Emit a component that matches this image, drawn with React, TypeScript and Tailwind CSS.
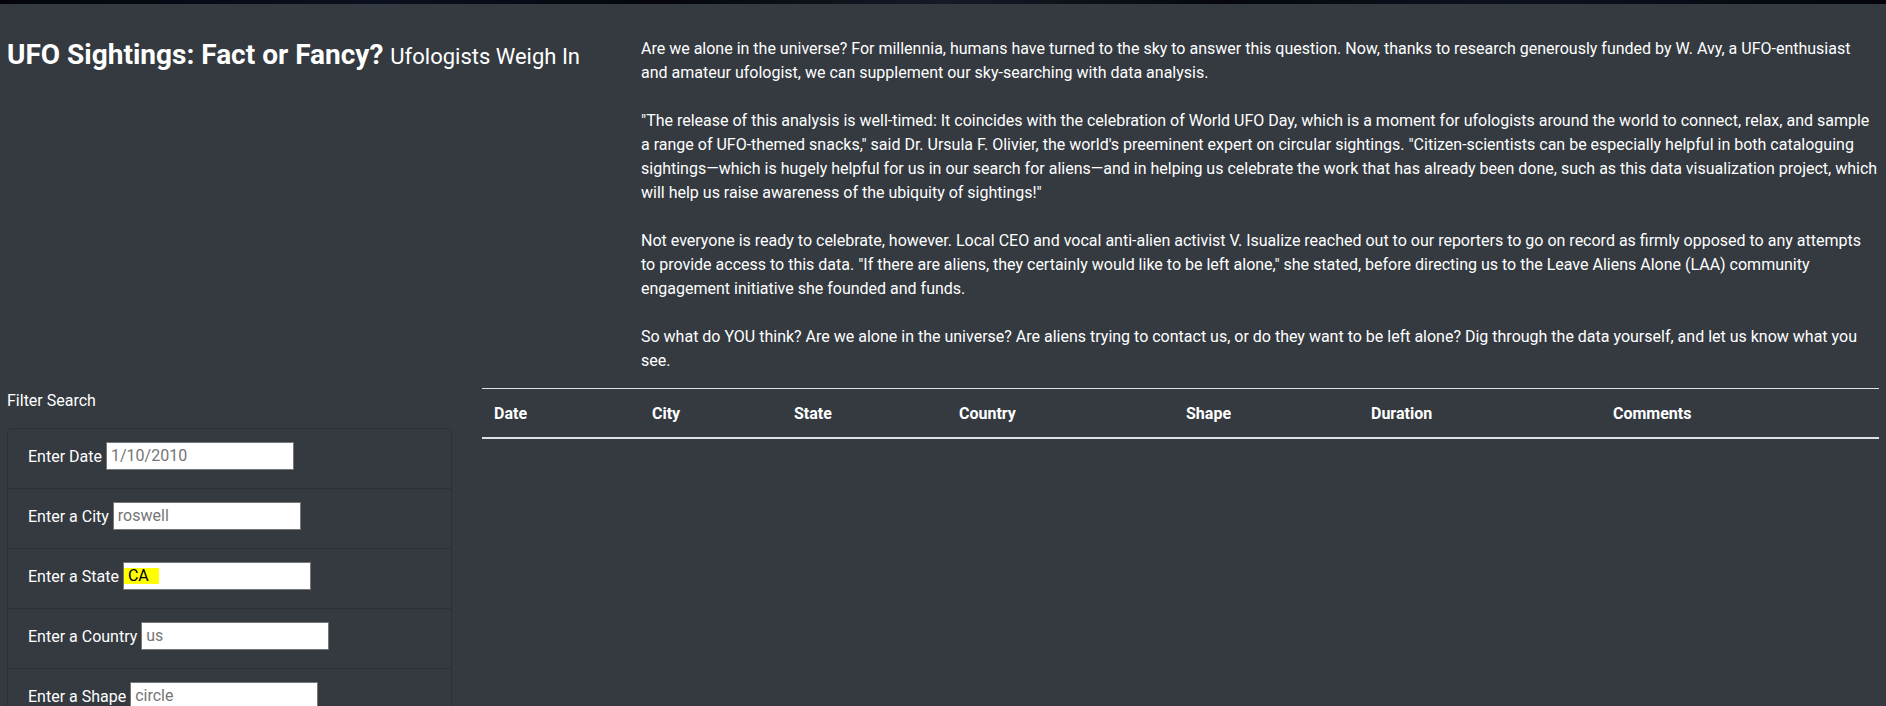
import React from "react";

const font = { fontFamily: "Roboto, 'Liberation Sans', sans-serif" };

const filters: { label: string; value: string; highlight?: boolean }[] = [
  { label: "Enter Date", value: "1/10/2010" },
  { label: "Enter a City", value: "roswell" },
  { label: "Enter a State", value: "CA", highlight: true },
  { label: "Enter a Country", value: "us" },
  { label: "Enter a Shape", value: "circle" },
];

const columns: { name: string; w: string }[] = [
  { name: "Date", w: "w-[158px]" },
  { name: "City", w: "w-[142px]" },
  { name: "State", w: "w-[165px]" },
  { name: "Country", w: "w-[227px]" },
  { name: "Shape", w: "w-[185px]" },
  { name: "Duration", w: "w-[242px]" },
  { name: "Comments", w: "w-[278px]" },
];

export default function App() {
  return (
    <div className="min-h-screen bg-[#343a40] text-white" style={font}>
      <div className="h-[4px] bg-[linear-gradient(90deg,#03050a_0%,#0b1020_20%,#04060b_35%,#151a26_50%,#05070c_65%,#0d1220_80%,#03050a_100%)]" />

      <div className="flex px-[7px] pt-[33px]">
        <div className="w-[634px] shrink-0">
          <h1 className="mt-[1px] text-[28px] leading-[34px] font-bold">
            UFO Sightings: Fact or Fancy?{" "}
            <small className="text-[22px] font-normal">Ufologists Weigh In</small>
          </h1>
        </div>
        <div className="flex-1 text-[16px] leading-[24px]">
          <p className="mb-[24px]">
            Are we alone in the universe? For millennia, humans have turned to the sky to answer this question. Now, thanks to
            research generously funded by W. Avy, a UFO-enthusiast and amateur ufologist, we can supplement our sky-searching
            with data analysis.
          </p>
          <p className="mb-[24px]">
            "The release of this analysis is well-timed: It coincides with the celebration of World UFO Day, which is a moment
            for ufologists around the world to connect, relax, and sample a range of UFO-themed snacks," said Dr. Ursula F.
            Olivier, the world's preeminent expert on circular sightings. "Citizen-scientists can be especially helpful in both
            cataloguing sightings—which is hugely helpful for us in our search for aliens—and in helping us celebrate the work
            that has already been done, such as this data visualization project, which will help us raise awareness of the
            ubiquity of sightings!"
          </p>
          <p className="mb-[24px]">
            Not everyone is ready to celebrate, however. Local CEO and vocal anti-alien activist V. Isualize reached out to our
            reporters to go on record as firmly opposed to any attempts to provide access to this data. "If there are aliens,
            they certainly would like to be left alone," she stated, before directing us to the Leave Aliens Alone (LAA)
            community engagement initiative she founded and funds.
          </p>
          <p>
            So what do YOU think? Are we alone in the universe? Are aliens trying to contact us, or do they want to be left
            alone? Dig through the data yourself, and let us know what you see.
          </p>
        </div>
      </div>

      <div className="mt-[15px] flex px-[7px]">
        <div className="w-[475px] shrink-0 pr-[30px]">
          <div className="mb-[16px] pt-[1px] text-[16px] leading-[24px]">Filter Search</div>
          <ul className="mt-[-1px] rounded-[4px] border border-[#2c3136]">
            {filters.map((f, i) => (
              <li
                key={f.label}
                className={`px-[20px] pt-[13px] pb-[18px] ${i < filters.length - 1 ? "border-b border-[#2c3136]" : ""}`}
              >
                <div className="flex h-[28px] items-center gap-[4px] text-[16px]">
                  <span className="pt-[1px]">{f.label}</span>
                  <div className="flex h-[28px] w-[188px] items-center border border-[#767676] bg-white text-[16px]">
                    {f.highlight ? (
                      <span className="flex h-[16px] items-center bg-[#ffff00] pl-[4px] pr-[10px] text-black">{f.value}</span>
                    ) : (
                      <span className="pl-[4px] text-[#757575]">{f.value}</span>
                    )}
                  </div>
                </div>
              </li>
            ))}
          </ul>
        </div>

        <div className="flex-1">
          <table className="w-full table-fixed border-collapse text-left">
            <thead>
              <tr className="border-t border-[#dee2e6]">
                {columns.map((c) => (
                  <th
                    key={c.name}
                    className={`${c.w} border-b-2 border-[#dee2e6] px-[12px] pt-[13px] pb-[11px] text-[16px] leading-[24px] font-bold`}
                  >
                    {c.name}
                  </th>
                ))}
              </tr>
            </thead>
            <tbody />
          </table>
        </div>
      </div>
    </div>
  );
}
